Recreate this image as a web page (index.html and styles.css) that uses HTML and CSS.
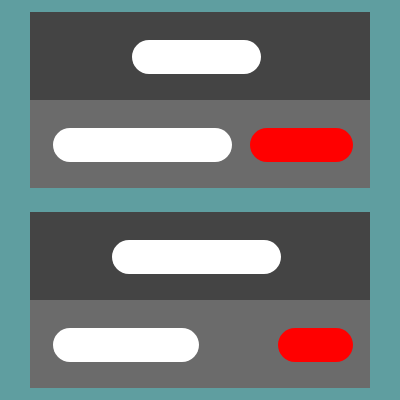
FILE: index.html
```html
<!DOCTYPE html>
<html>
<head>
<meta charset="utf-8">
<link rel="stylesheet" href="styles.css">
</head>
<body>
<div class="stack">
  <div class="card">
    <div class="card-head"><div class="pill pill-white w129"></div></div>
    <div class="card-body">
      <div class="pill pill-white w179"></div>
      <div class="pill pill-red w103"></div>
    </div>
  </div>
  <div class="card">
    <div class="card-head"><div class="pill pill-white w169"></div></div>
    <div class="card-body">
      <div class="pill pill-white w146"></div>
      <div class="pill pill-red w75"></div>
    </div>
  </div>
</div>
</body>
</html>
```
FILE: styles.css
```css
html, body {
  margin: 0;
  padding: 0;
  background: #5f9ea0;
  width: 400px;
  height: 400px;
  overflow: hidden;
}
.stack {
  display: flex;
  flex-direction: column;
  gap: 24px;
  padding: 12px 30px;
}
.card {
  display: flex;
  flex-direction: column;
}
.card-head {
  height: 88px;
  box-sizing: border-box;
  background: #444444;
  display: flex;
  justify-content: center;
  align-items: flex-start;
  padding: 28px 7px 0 0;
}
.card-body {
  height: 88px;
  box-sizing: border-box;
  background: #6b6b6b;
  display: flex;
  justify-content: space-between;
  align-items: flex-start;
  padding: 28px 17px 0 23px;
}
.pill {
  height: 34px;
  border-radius: 17px;
}
.pill-white { background: #ffffff; }
.pill-red { background: #ff0000; }
.w129 { width: 129px; }
.w179 { width: 179px; }
.w103 { width: 103px; }
.w169 { width: 169px; }
.w146 { width: 146px; }
.w75 { width: 75px; }
```
